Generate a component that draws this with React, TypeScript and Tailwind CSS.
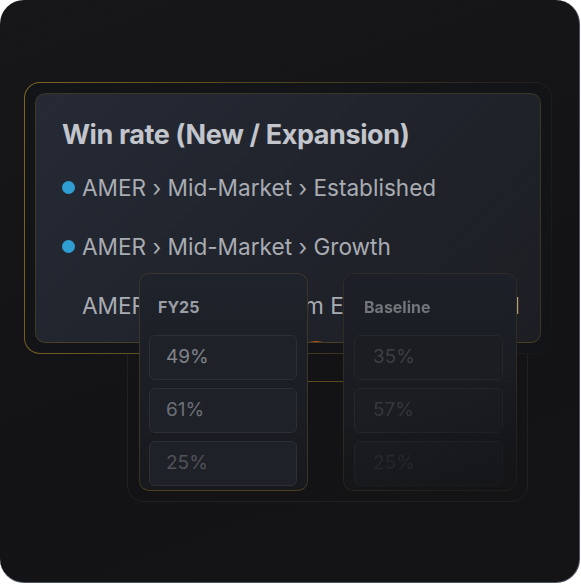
import React from "react";

const font = { fontFamily: "Inter, 'Noto Sans', sans-serif" };

function Dot() {
  return <span className="w-[13px] h-[13px] rounded-full bg-[#2f9fd3] shrink-0" />;
}

export default function App() {
  return (
    <div className="w-[581px] h-[584px] bg-white" style={font}>
      <div className="relative w-[580px] h-[583px] rounded-[24px] bg-[linear-gradient(160deg,#17171a,#131315_60%,#141416)] border-r border-b border-[#4b5262] overflow-hidden">
        {/* background stacked box */}
        <div className="absolute left-[127px] top-[300px] w-[401px] h-[202px] rounded-[16px] border border-[#1e2024]" />
        <div className="absolute left-[145px] top-[381px] w-[365px] h-[100px] border-t border-[#5a4a1c]" />

        {/* main box */}
        <div className="relative ml-[24px] mt-[82px] w-[528px] h-[272px] rounded-[16px] p-px bg-[linear-gradient(100deg,#7d6621,#4f431c_45%,#2a2720_80%,#26252222)]">
          <div className="w-full h-full rounded-[15px] bg-[#131417] p-[10px]">
            <div className="relative w-full h-full rounded-[10px] border border-[#3a3629] border-b-[#4a3f22] border-l-[#403823] bg-[linear-gradient(135deg,#252a35,#20232b_55%,#1c1e23)] pl-[26px] pt-[27px] overflow-hidden">
              <div className="text-[27px] leading-[27px] font-bold text-[#c2c5cc] tracking-[-0.015em] whitespace-nowrap">
                Win rate (New / Expansion)
              </div>
              <div className="mt-[10px] flex flex-col text-[22.6px] text-[#a9acb3]">
                <div className="h-[59px] flex items-center gap-[7px]">
                  <Dot />
                  <span>AMER › Mid-Market › Established</span>
                </div>
                <div className="h-[59px] flex items-center gap-[7px]">
                  <Dot />
                  <span>AMER › Mid-Market › Growth</span>
                </div>
                <div className="h-[59px] flex items-center gap-[7px] whitespace-nowrap">
                  <span className="w-[13px] shrink-0" />
                  <span>AMER › Large Platform Enterprise Annual</span>
                </div>
              </div>
              <span className="absolute left-[273px] bottom-[-1px] w-[14px] h-[2px] bg-[linear-gradient(90deg,transparent,#c2561a,transparent)]" />
            </div>
          </div>
        </div>

        {/* FY25 panel */}
        <div className="absolute left-[139px] top-[273px] w-[169px] h-[218px] rounded-[10px] border border-[#3a3528] border-b-[#4d4121] bg-[linear-gradient(180deg,#1f232b,#1b1e24_50%,#18191d)] pl-[9px]">
          <div className="mt-[25px] mb-[20px] pl-[9px] text-[16px] leading-[16px] font-bold text-[#9a9da4]">FY25</div>
          <div className="flex flex-col gap-[8px]">
            {[
              ["49%", "text-[#80838b]"],
              ["61%", "text-[#6d7078]"],
              ["25%", "text-[#505359]"],
            ].map(([v, c]) => (
              <div key={v} className="w-[148px] h-[45px] rounded-[6px] border border-[#2c2f36] bg-[#1e2127] flex items-center pl-[16px]">
                <span className={`text-[19px] ${c}`}>{v}</span>
              </div>
            ))}
          </div>
        </div>

        {/* Baseline panel */}
        <div className="absolute left-[343px] top-[273px] w-[174px] h-[218px] rounded-[10px] border border-[#2f2c25] border-b-[#3a3220] bg-[linear-gradient(180deg,#1d2028,#1a1c21_50%,#17181b)] pl-[10px] [mask-image:linear-gradient(160deg,black_55%,rgba(0,0,0,0.35)_95%)]">
          <div className="mt-[25px] mb-[20px] pl-[10px] text-[16px] leading-[16px] font-bold text-[#727579]">Baseline</div>
          <div className="flex flex-col gap-[8px]">
            {[
              ["35%", "text-[#3d4046]"],
              ["57%", "text-[#35383d]"],
              ["25%", "text-[#2e3035]"],
            ].map(([v, c]) => (
              <div key={v + "b"} className="w-[149px] h-[45px] rounded-[6px] border border-[#24272c] bg-[#1b1d22] flex items-center pl-[18px]">
                <span className={`text-[19px] ${c}`}>{v}</span>
              </div>
            ))}
          </div>
        </div>
      </div>
    </div>
  );
}
